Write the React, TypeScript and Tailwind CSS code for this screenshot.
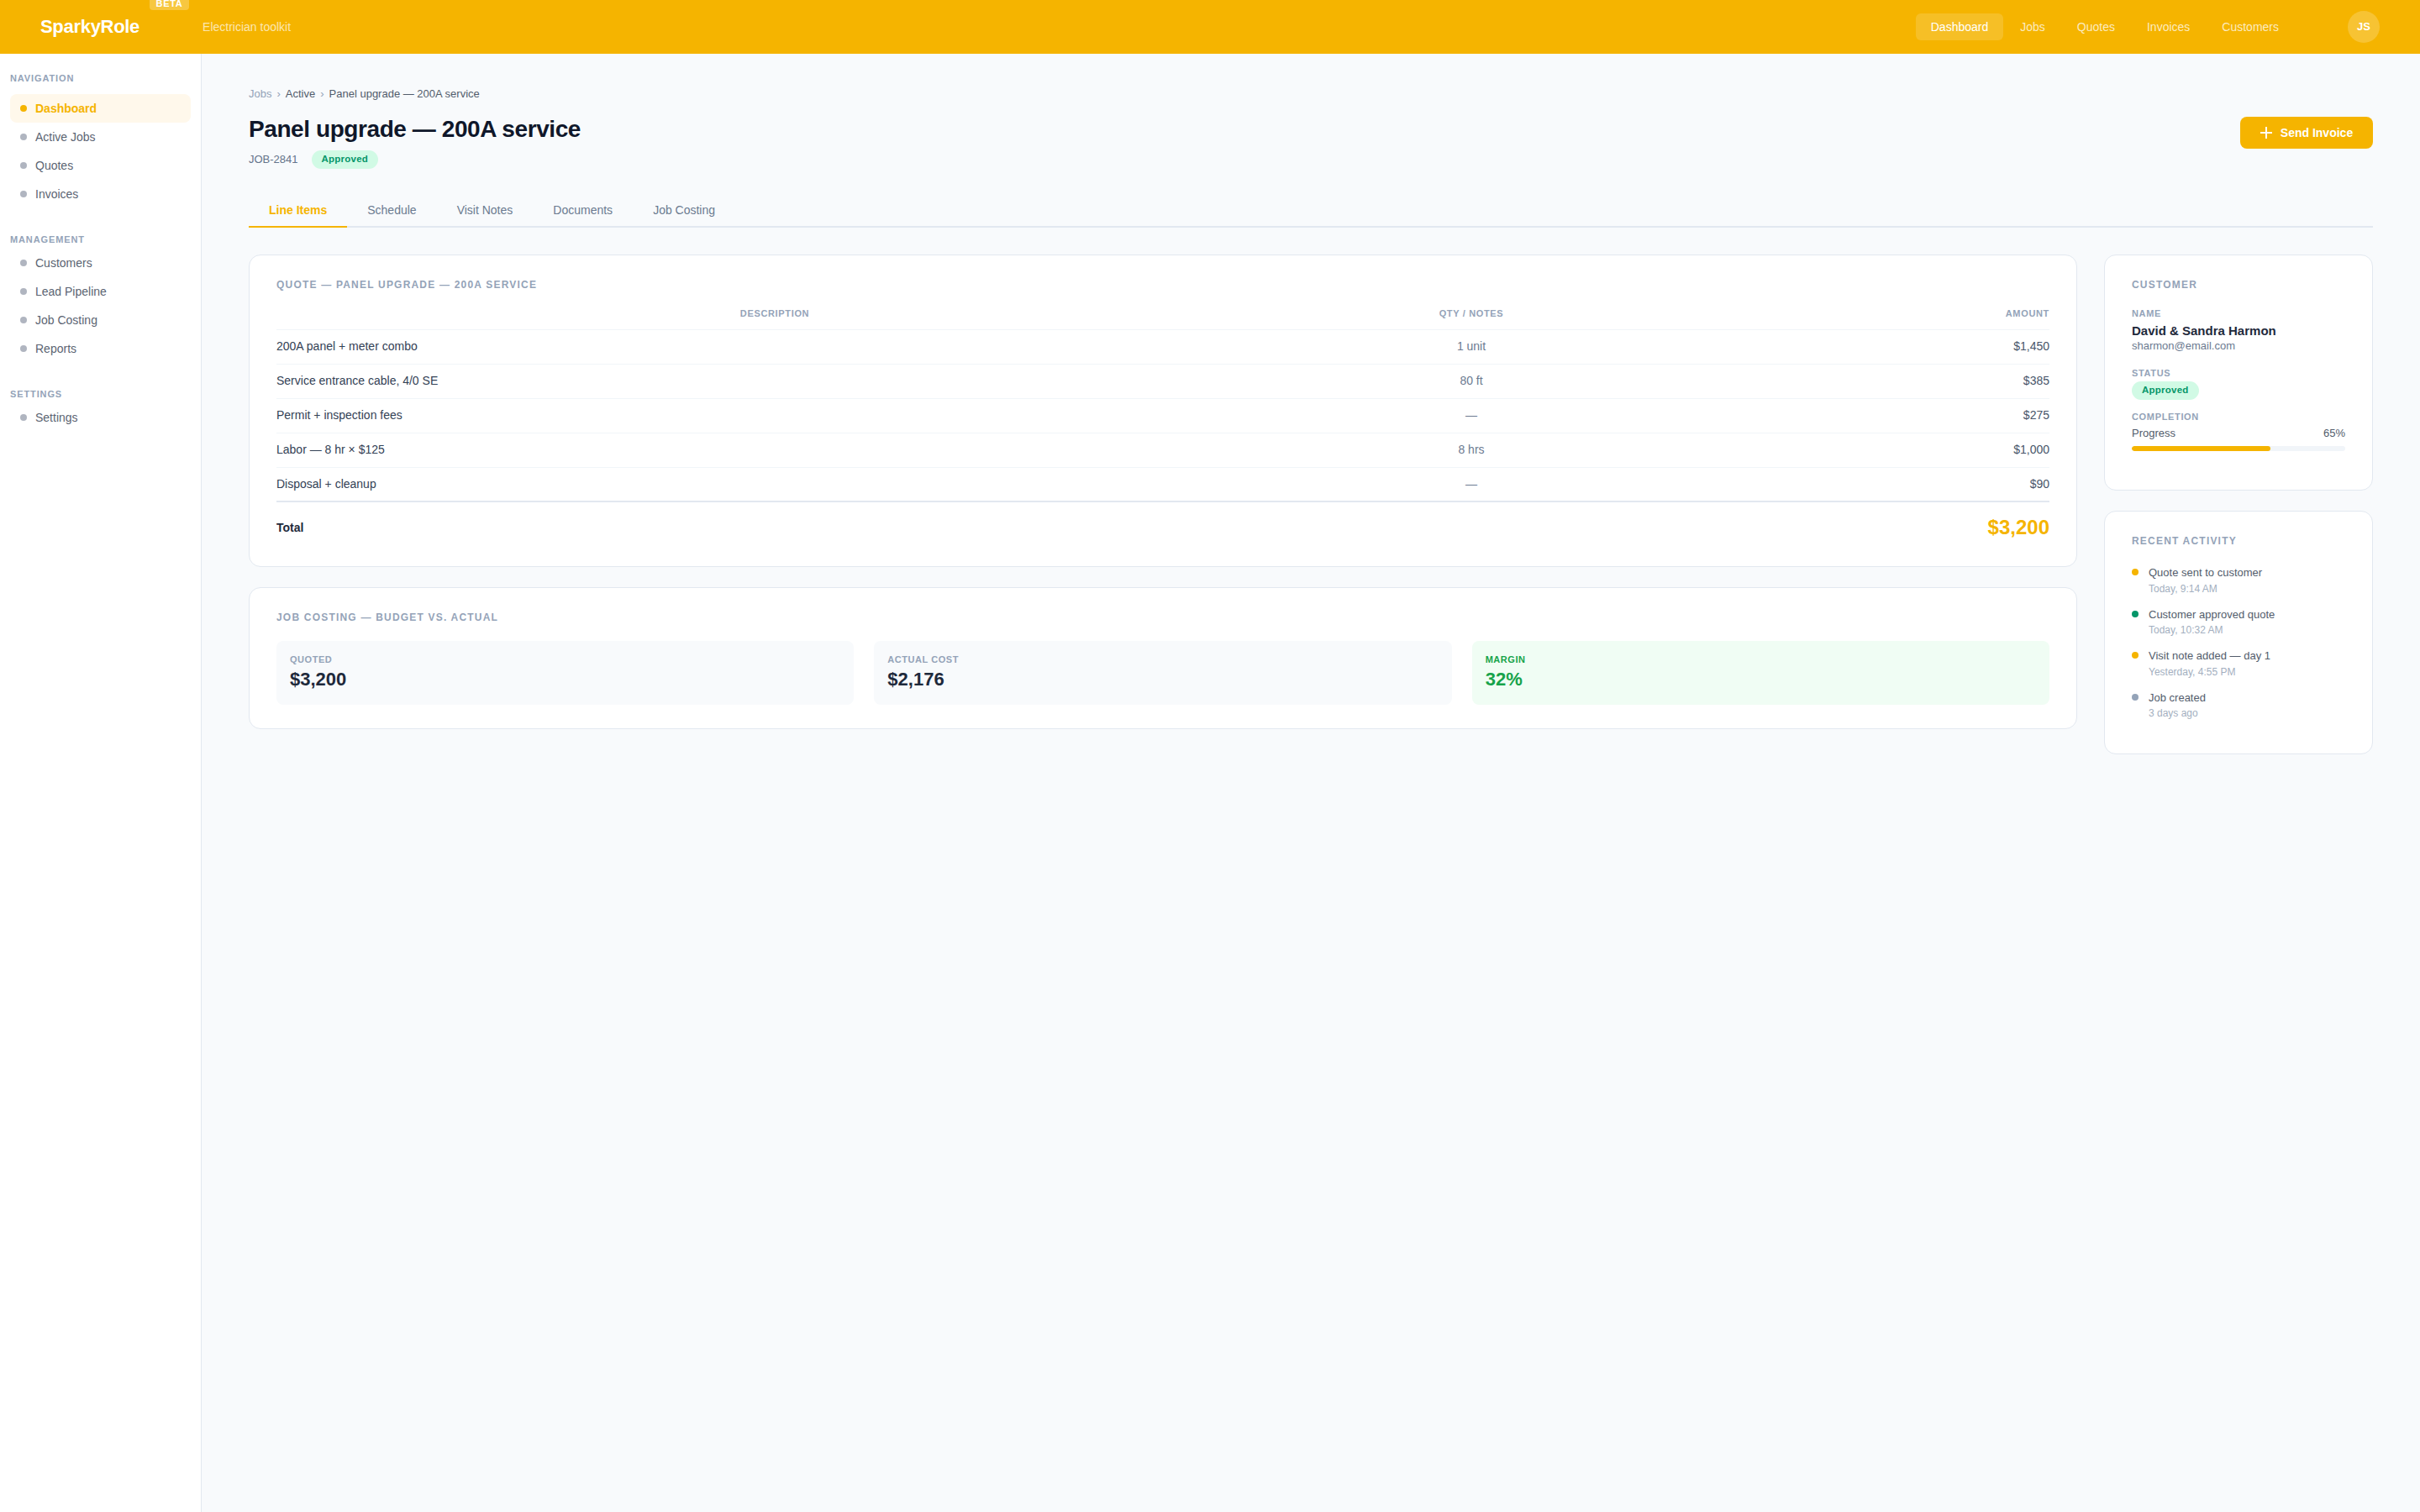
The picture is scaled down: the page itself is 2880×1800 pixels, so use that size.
import React from "react";

const navGroups = [
  { title: "Navigation", items: ["Dashboard", "Active Jobs", "Quotes", "Invoices"] },
  { title: "Management", items: ["Customers", "Lead Pipeline", "Job Costing", "Reports"] },
  { title: "Settings", items: ["Settings"] },
];

const lineItems = [
  ["200A panel + meter combo", "1 unit", "$1,450"],
  ["Service entrance cable, 4/0 SE", "80 ft", "$385"],
  ["Permit + inspection fees", "—", "$275"],
  ["Labor — 8 hr × $125", "8 hrs", "$1,000"],
  ["Disposal + cleanup", "—", "$90"],
];

const activity = [
  { text: "Quote sent to customer", time: "Today, 9:14 AM", dot: "bg-[#f5b400]" },
  { text: "Customer approved quote", time: "Today, 10:32 AM", dot: "bg-[#059669]" },
  { text: "Visit note added — day 1", time: "Yesterday, 4:55 PM", dot: "bg-[#f5b400]" },
  { text: "Job created", time: "3 days ago", dot: "bg-[#94a3b8]" },
];

const SectionTitle = ({ children }: { children: React.ReactNode }) => (
  <h3 className="text-[12px] leading-[15px] font-bold uppercase tracking-[0.1em] text-[#94a3b8]">{children}</h3>
);

const FieldLabel = ({ children }: { children: React.ReactNode }) => (
  <div className="text-[11px] leading-[13px] font-bold uppercase tracking-[0.06em] text-[#94a3b8]">{children}</div>
);

const Badge = () => (
  <span className="inline-flex h-[22px] items-center rounded-full bg-[#d1fae5] px-3 text-[11.5px] font-bold tracking-[0.02em] text-[#059669]">
    Approved
  </span>
);

const Card = ({ className = "", children }: { className?: string; children: React.ReactNode }) => (
  <section className={`rounded-[14px] border border-[#e2e8f0] bg-white ${className}`}>{children}</section>
);

export default function App() {
  return (
    <div className="flex min-h-screen flex-col bg-[#f8fafc] font-['Liberation_Sans',Arial,sans-serif] text-[14px] text-[#1e293b] antialiased">
      <header className="flex h-16 items-center bg-[#f5b400] pl-12 pr-12 text-white">
        <div className="relative text-[22px] leading-[26px] font-bold tracking-[-0.3px]">
          SparkyRole
          <span className="absolute left-[130px] top-[-27px] flex h-5 w-[47px] items-end justify-center rounded-[4px] bg-white/25 pb-[1px] text-[11px] font-bold leading-[14px] tracking-[0.06em]">
            BETA
          </span>
        </div>
        <span className="ml-[75px] text-white/70">Electrician toolkit</span>
        <nav className="ml-auto flex gap-[2px]">
          {["Dashboard", "Jobs", "Quotes", "Invoices", "Customers"].map((item, i) => (
            <a
              key={item}
              className={`flex h-8 items-center rounded-[6px] px-[18px] ${i === 0 ? "bg-white/15 text-white" : "text-white/75"}`}
            >
              {item}
            </a>
          ))}
        </nav>
        <div className="ml-16 flex h-[38px] w-[38px] items-center justify-center rounded-full bg-white/20 text-[13px] font-bold">
          JS
        </div>
      </header>

      <div className="flex flex-1">
        <aside className="w-60 shrink-0 border-r border-[#e2e8f0] bg-white px-3 pt-[23px]">
          {navGroups.map((group, g) => (
            <div key={group.title} className="mb-[31px]">
              <div
                className={`text-[11px] leading-[13px] font-bold uppercase tracking-[0.08em] text-[#94a3b8] ${
                  g === 0 ? "mb-3" : "mb-1"
                }`}
              >
                {group.title}
              </div>
              <ul>
                {group.items.map((item) => {
                  const active = item === "Dashboard";
                  return (
                    <li
                      key={item}
                      className={`flex h-[34px] items-center gap-[10px] rounded-lg px-3 ${
                        active ? "bg-[#fff8eb] font-semibold text-[#f5b400]" : "text-[#5b6472]"
                      }`}
                    >
                      <span className={`h-2 w-2 rounded-full ${active ? "bg-[#f5b400]" : "bg-[#b0b5c0]"}`} />
                      {item}
                    </li>
                  );
                })}
              </ul>
            </div>
          ))}
        </aside>

        <main className="flex-1 px-14 pt-10">
          <div className="flex items-start justify-between">
            <div>
              <div className="flex items-center text-[13px] leading-4 text-[#525c6b]">
                <span className="text-[#94a3b8]">Jobs</span>
                <span className="mx-[6px] text-[#94a3b8]">›</span>
                <span>Active</span>
                <span className="mx-[6px] text-[#94a3b8]">›</span>
                <span>Panel upgrade — 200A service</span>
              </div>
              <h1 className="mt-[17px] text-[28px] leading-[34px] font-bold tracking-[-0.015em] text-[#0f172a]">
                Panel upgrade — 200A service
              </h1>
              <div className="mt-2 flex items-center gap-4 text-[13px] text-[#64748b]">
                JOB-2841
                <Badge />
              </div>
            </div>
            <button className="mt-[35px] flex h-[38px] w-[158px] items-center justify-center gap-[10px] rounded-[8px] bg-[#f5b400] text-[14px] font-bold text-white">
              <svg width="14" height="14" viewBox="0 0 14 14" fill="none" stroke="currentColor" strokeWidth="2">
                <path d="M7 0v14M0 7h14" />
              </svg>
              Send Invoice
            </button>
          </div>

          <div className="mt-[26px] flex h-[44px] items-stretch gap-0 border-b-2 border-[#e2e8f0]">
            {["Line Items", "Schedule", "Visit Notes", "Documents", "Job Costing"].map((tab, i) => (
              <button
                key={tab}
                className={`-mb-[2px] border-b-2 px-6 pt-[5px] ${
                  i === 0 ? "border-[#f5b400] font-semibold text-[#f5b400]" : "border-transparent text-[#6b7a90]"
                }`}
              >
                {tab}
              </button>
            ))}
          </div>

          <div className="mt-8 flex items-start gap-8">
            <div className="flex min-w-0 flex-1 flex-col gap-6">
              <Card className="px-8 pt-7 pb-7">
                <SectionTitle>Quote — Panel upgrade — 200A service</SectionTitle>
                <table className="mt-[7px] w-full table-fixed border-collapse">
                  <colgroup>
                    <col className="w-[1186px]" />
                    <col className="w-[472px]" />
                    <col />
                  </colgroup>
                  <thead>
                    <tr className="h-[38px] border-b border-[#f1f5f9] text-[11px] font-bold uppercase tracking-[0.06em] text-[#94a3b8]">
                      <th className="font-bold">Description</th>
                      <th className="font-bold">Qty / Notes</th>
                      <th className="text-right font-bold">Amount</th>
                    </tr>
                  </thead>
                  <tbody>
                    {lineItems.map(([desc, qty, amount]) => (
                      <tr key={desc} className="h-[41px] border-b border-[#f1f5f9] last:border-b-0">
                        <td className="text-[#334155]">{desc}</td>
                        <td className="text-center text-[#6b7a90]">{qty}</td>
                        <td className="text-right text-[#475569]">{amount}</td>
                      </tr>
                    ))}
                    <tr className="border-t-2 border-[#e2e8f0]">
                      <td className="pt-[18px] pb-[5px] font-bold text-[#1e293b]">Total</td>
                      <td />
                      <td className="pt-4 pb-[5px] text-right text-[24px] leading-[27px] font-bold text-[#f5b400]">
                        $3,200
                      </td>
                    </tr>
                  </tbody>
                </table>
              </Card>

              <Card className="px-8 py-7">
                <SectionTitle>Job costing — Budget vs. actual</SectionTitle>
                <div className="mt-5 grid grid-cols-3 gap-6">
                  {[
                    { label: "Quoted", value: "$3,200" },
                    { label: "Actual cost", value: "$2,176" },
                    { label: "Margin", value: "32%", good: true },
                  ].map((tile) => (
                    <div
                      key={tile.label}
                      className={`h-[76px] rounded-[8px] px-4 pt-4 ${tile.good ? "bg-[#f0fdf4]" : "bg-[#f8fafc]"}`}
                    >
                      <div
                        className={`text-[11px] leading-[13px] font-bold uppercase tracking-[0.05em] ${
                          tile.good ? "text-[#16a34a]" : "text-[#94a3b8]"
                        }`}
                      >
                        {tile.label}
                      </div>
                      <div
                        className={`mt-1 text-[22px] leading-[26px] font-bold ${
                          tile.good ? "text-[#16a34a]" : "text-[#1e293b]"
                        }`}
                      >
                        {tile.value}
                      </div>
                    </div>
                  ))}
                </div>
              </Card>
            </div>

            <div className="flex w-80 shrink-0 flex-col gap-6">
              <Card className="h-[281px] px-8 pt-7">
                <SectionTitle>Customer</SectionTitle>
                <div className="mt-5">
                  <FieldLabel>Name</FieldLabel>
                  <div className="mt-1 text-[15px] leading-[20px] font-bold text-[#1e293b]">David &amp; Sandra Harmon</div>
                  <div className="text-[13px] leading-[16px] text-[#6b7a90]">sharmon@email.com</div>
                </div>
                <div className="mt-[18px]">
                  <FieldLabel>Status</FieldLabel>
                  <div className="mt-[3px] flex">
                    <Badge />
                  </div>
                </div>
                <div className="mt-[14px]">
                  <FieldLabel>Completion</FieldLabel>
                  <div className="mt-1 flex justify-between text-[13px] leading-[18px] text-[#525c6b]">
                    <span>Progress</span>
                    <span>65%</span>
                  </div>
                  <div className="mt-[6px] h-[6px] overflow-hidden rounded-full bg-[#f1f5f9]">
                    <div className="h-full w-[65%] rounded-full bg-[#f5b400]" />
                  </div>
                </div>
              </Card>

              <Card className="h-[290px] px-8 pt-7">
                <SectionTitle>Recent activity</SectionTitle>
                <ul className="mt-5">
                  {activity.map((a) => (
                    <li key={a.text} className="mb-3 flex gap-3">
                      <span className={`mt-[5px] h-2 w-2 shrink-0 rounded-full ${a.dot}`} />
                      <div>
                        <div className="text-[13px] leading-[19.5px] text-[#525c6b]">{a.text}</div>
                        <div className="text-[12px] leading-[18px] text-[#a3afc0]">{a.time}</div>
                      </div>
                    </li>
                  ))}
                </ul>
              </Card>
            </div>
          </div>
        </main>
      </div>
    </div>
  );
}
